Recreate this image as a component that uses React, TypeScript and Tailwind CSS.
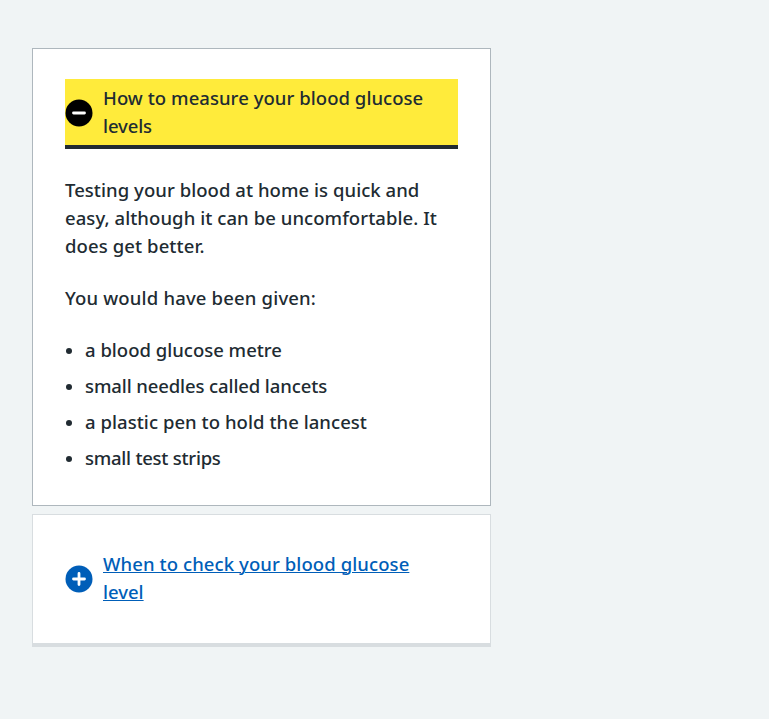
import React from "react";

const items = [
  { text: "a blood glucose metre", tracking: "tracking-[0px]" },
  { text: "small needles called lancets", tracking: "tracking-[-0.11px]" },
  { text: "a plastic pen to hold the lancest", tracking: "tracking-[0.05px]" },
  { text: "small test strips", tracking: "tracking-[-0.25px]" },
];

function Line({ text, tracking }: { text: string; tracking: string }) {
  return <span className={`block whitespace-nowrap ${tracking}`}>{text}</span>;
}

export default function App() {
  return (
    <main className="min-h-screen bg-[#f0f4f5] px-8 pt-12 font-['Noto_Sans',sans-serif] text-[18.5px] leading-7 font-medium text-[#212b32]">
      <section className="h-[458px] w-[459px] border border-[#aeb7bd] bg-white px-8 pt-[30px]">
        <button className="flex h-[70px] w-full items-center border-b-4 border-[#212b32] bg-[#ffeb3b] pt-px text-left">
          <svg className="mr-[10px] h-7 w-7 shrink-0" viewBox="0 0 28 28">
            <circle cx="14" cy="14" r="13.5" fill="#000" />
            <path d="M8.5 14h11" stroke="#fff" strokeWidth="2.8" strokeLinecap="round" />
          </svg>
          <span className="pb-0.5">
            <Line text="How to measure your blood glucose" tracking="tracking-[0.05px]" />
            <Line text="levels" tracking="tracking-[-0.1px]" />
          </span>
        </button>
        <p className="mt-[27px]">
          <Line text="Testing your blood at home is quick and" tracking="tracking-[0.05px]" />
          <Line text="easy, although it can be uncomfortable. It" tracking="tracking-[0.07px]" />
          <Line text="does get better." tracking="tracking-[0.1px]" />
        </p>
        <p className="mt-6">
          <Line text="You would have been given:" tracking="tracking-[0.17px]" />
        </p>
        <ul className="mt-6 flex flex-col gap-2">
          {items.map((item) => (
            <li key={item.text} className="flex items-center">
              <span className="mt-0.5 mr-[13px] ml-px h-1.5 w-1.5 rounded-full bg-[#212b32]" />
              <Line text={item.text} tracking={item.tracking} />
            </li>
          ))}
        </ul>
      </section>
      <section className="mt-2 h-[133px] w-[459px] border border-b-4 border-[#d8dde0] bg-white px-8 pt-[35px]">
        <button className="flex items-center text-left text-[#005eb8]">
          <svg className="mr-[10px] h-7 w-7 shrink-0" viewBox="0 0 28 28">
            <circle cx="14" cy="14" r="13.5" fill="#005eb8" />
            <path d="M8.5 14h11M14 8.5v11" stroke="#fff" strokeWidth="2.8" strokeLinecap="round" />
          </svg>
          <span className="pb-0.5 underline decoration-1 underline-offset-1">
            <Line text="When to check your blood glucose" tracking="tracking-[0.09px]" />
            <Line text="level" tracking="tracking-[0px]" />
          </span>
        </button>
      </section>
    </main>
  );
}
